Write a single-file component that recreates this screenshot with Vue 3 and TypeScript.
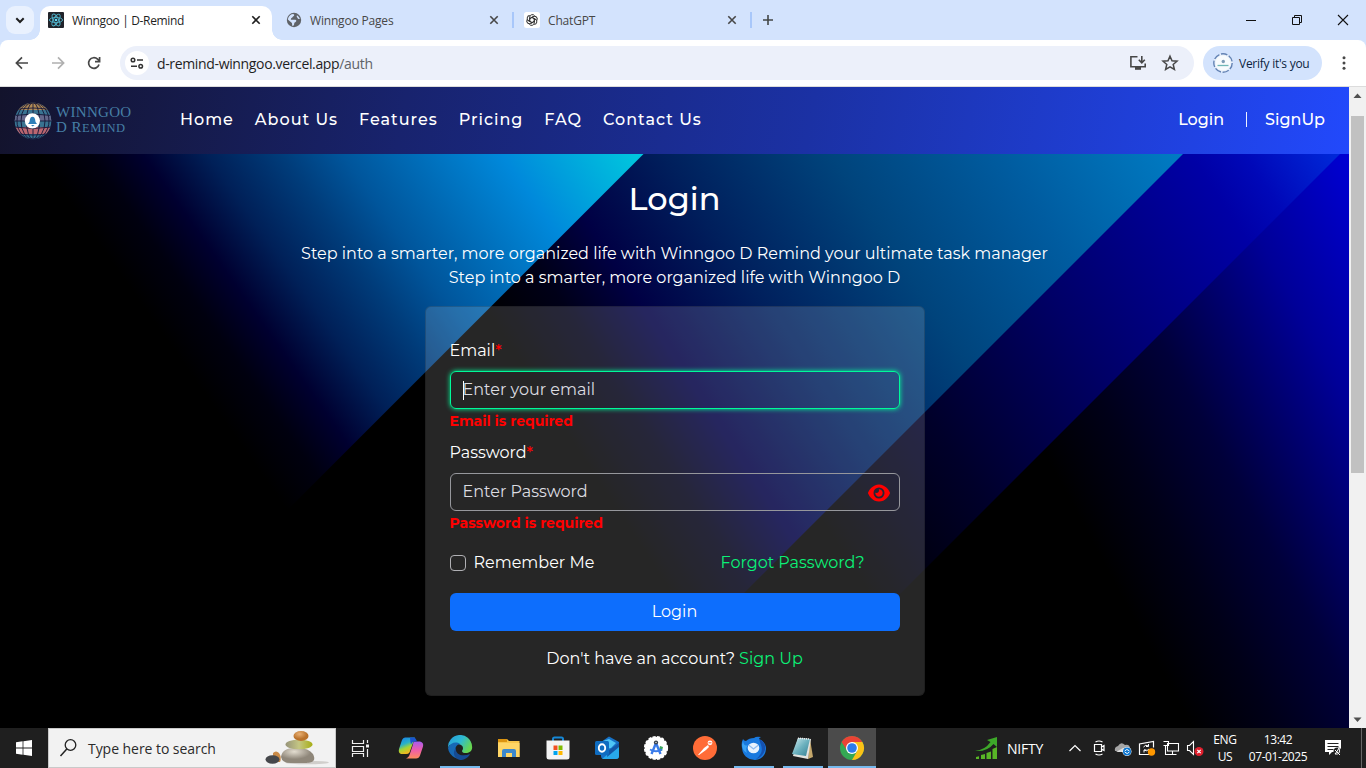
<script setup lang="ts">
interface Tab { title: string; icon: 'react' | 'globe' | 'gpt'; active?: boolean }
const tabs: Tab[] = [
  { title: 'Winngoo | D-Remind', icon: 'react', active: true },
  { title: 'Winngoo Pages', icon: 'globe' },
  { title: 'ChatGPT', icon: 'gpt' },
]
const links: string[] = ['Home', 'About Us', 'Features', 'Pricing', 'FAQ', 'Contact Us']
const petals: number[] = [0, 60, 120, 180, 240, 300]
</script>

<template>
  <div class="screen">
    <div class="tabstrip">
      <div class="tabsearch">
        <svg width="28" height="28" viewBox="0 0 28 28"><path d="M10.300 12.300l3.700 3.700 3.700-3.700" fill="none" stroke="#1f1f1f" stroke-width="2" /></svg>
      </div>
      <div v-for="t in tabs" :key="t.title" class="tab" :class="{ active: t.active }">
        <svg v-if="t.icon === 'react'" width="16" height="16" viewBox="0 0 16 16">
          <rect width="16" height="16" rx="1" fill="#20232a" />
          <g fill="none" stroke="#4fb3cb" stroke-width=".9">
            <ellipse cx="8" cy="8" rx="6.600" ry="2.600" />
            <ellipse cx="8" cy="8" rx="6.600" ry="2.600" transform="rotate(60 8 8)" />
            <ellipse cx="8" cy="8" rx="6.600" ry="2.600" transform="rotate(120 8 8)" />
          </g>
          <circle cx="8" cy="8" r="1.300" fill="#61dafb" />
        </svg>
        <svg v-else-if="t.icon === 'globe'" width="16" height="16" viewBox="0 0 16 16">
          <circle cx="8" cy="8" r="7.200" fill="#5f6368" />
          <path d="M7 1.900c2 .3 1.200 2 .2 2.400-.8.4-.4 1.500-1.600 1.600-.9.2-.3 1.500-1 1.800h4.600c1.300 0 1.400 1.500.6 2-.8.5-1.600 1-1.600 2s-.7 2.300-1.700 2.200c-.8-1.200.1-2.900-1.100-3.500C4 9.700 3 8.600 1.900 7.600 2.100 4.700 4.200 2.200 7 1.900zM11 3.200c1.200.8 2.400 2 2.800 3.700-.9.300-2-.1-2.200-1-.3-.8-1.500-1.300-.6-2.700z" fill="#d3e3fd" />
        </svg>
        <svg v-else width="16" height="16" viewBox="0 0 16 16">
          <rect width="16" height="16" rx="2.500" fill="#fff" />
          <g fill="none" stroke="#333" stroke-width="1">
            <path v-for="r in petals" :key="r" :transform="`rotate(${r} 8 8)`" d="M5.700 9.300V5.100a2.700 2.700 0 0 1 5-1.200M5.700 6.700L8.800 4.900" />
          </g>
        </svg>
        <span class="title">{{ t.title }}</span>
        <svg class="x" width="16" height="16" viewBox="0 0 16 16"><path d="M4.300 4.300l7.400 7.400M11.700 4.300l-7.400 7.400" stroke="currentColor" stroke-width="1.600" /></svg>
      </div>
      <svg class="plus" width="16" height="16" viewBox="0 0 16 16"><path d="M8 3v10M3 8h10" stroke="#444746" stroke-width="1.600" /></svg>
      <div class="winctl">
        <svg width="46" height="40" viewBox="0 0 46 40"><path d="M18 20.500h10" stroke="#111" /></svg>
        <svg width="46" height="40" viewBox="0 0 46 40"><path d="M18.500 17.500h7v7h-7zM20.500 17.500v-2h7v7h-2" fill="none" stroke="#111" /></svg>
        <svg width="46" height="40" viewBox="0 0 46 40"><path d="M18 15l10 10M28 15L18 25" stroke="#111" stroke-width="1.100" /></svg>
      </div>
    </div>

    <div class="toolbar">
      <div class="navbtns">
        <svg width="36" height="34" viewBox="0 0 36 34"><path d="M24 17H13M18 11.400L12.400 17l5.600 5.600" fill="none" stroke="#474747" stroke-width="1.700" /></svg>
        <svg width="36" height="34" viewBox="0 0 36 34"><path d="M12 17h11M18 11.400l5.600 5.600-5.600 5.600" fill="none" stroke="#b0b0b0" stroke-width="1.700" /></svg>
        <svg width="36" height="34" viewBox="0 0 36 34"><path d="M23 18.500a5.300 5.300 0 1 1-1.400-5.300l1.800 1.800M23.600 11v4.600H19" fill="none" stroke="#474747" stroke-width="1.700" /></svg>
      </div>
      <div class="omnibox">
        <span class="site">
          <svg width="24" height="24" viewBox="0 0 24 24"><g fill="none" stroke="#333" stroke-width="1.500"><circle cx="8" cy="9" r="1.800" /><path d="M12 9h6M6 15.300h6" /><circle cx="15.700" cy="15.300" r="1.800" /></g></svg>
        </span>
        <span class="url">d-remind-winngoo.vercel.app<i>/auth</i></span>
        <svg class="install" width="18" height="18" viewBox="0 0 18 18"><path d="M8.500 2.700H1.900v10.100H16.200V9.500M12.800 2v6.500M9.800 5.800l3 3 3-3" fill="none" stroke="#474747" stroke-width="1.600" /><path d="M6 13h6v2.800H6z" fill="#474747" /></svg>
        <svg class="star" width="18" height="18" viewBox="0 0 18 18"><path d="M9 2.200l2 4.600 5 .4-3.800 3.300 1.200 4.900L9 12.800l-4.400 2.600 1.200-4.900L2 7.200l5-.4z" fill="none" stroke="#474747" stroke-width="1.500" /></svg>
      </div>
      <div class="verify">
        <svg width="20" height="20" viewBox="0 0 20 20"><circle cx="10" cy="10" r="9.700" fill="#e8f0fa" /><circle cx="10" cy="10" r="9.200" fill="none" stroke="#6282b4" stroke-width="1.400" stroke-dasharray="6.600 1.600" /><circle cx="10" cy="10" r="7.500" fill="#f8fbfd" /><circle cx="10.300" cy="8.500" r="1.700" fill="#7e9cb6" /><path d="M4.500 12.500h11" stroke="#70b7b7" stroke-width="1.300" /></svg>
        <span>Verify it's you</span>
      </div>
      <svg class="dots" width="16" height="20" viewBox="0 0 16 20" fill="#474747"><circle cx="8" cy="4.800" r="1.500" /><circle cx="8" cy="10" r="1.500" /><circle cx="8" cy="15.200" r="1.500" /></svg>
    </div>

    <div class="viewport">
      <div class="page">
        <header>
          <div class="brand">
            <svg width="38" height="38" viewBox="0 0 38 38">
              <defs><clipPath id="ball"><circle cx="19" cy="19" r="18.300" /></clipPath></defs>
              <g clip-path="url(#ball)">
                <rect width="38" height="38" fill="#397391" />
                <rect width="38" height="8" fill="#b18a55" />
                <rect y="13" width="38" height="6" fill="#64678b" />
                <rect y="25" width="38" height="7" fill="#b96670" />
                <g fill="none" stroke="#151638" stroke-width=".9">
                  <path d="M0 8q19-4 38 0M0 13.500q19-3 38 0M0 25q19 3 38 0M0 31q19 4 38 0M0 19h38M19 0v38" />
                  <ellipse cx="19" cy="19" rx="6.500" ry="18.500" /><ellipse cx="19" cy="19" rx="12" ry="18.500" /><ellipse cx="19" cy="19" rx="16" ry="18.500" />
                </g>
              </g>
              <circle cx="18.400" cy="18.800" r="7.600" fill="#fff" />
              <path d="M14 22q2-2 2-5a2.600 3 0 0 1 5 0q0 3 2 5zM17 23h3.500l-1.700 1.600z" fill="#2f7fb8" />
            </svg>
            <div class="wordmark"><span class="w1">WINNGOO</span><span class="w2">D R<small>EMIND</small></span></div>
          </div>
          <nav><a v-for="l in links" :key="l">{{ l }}</a></nav>
          <div class="account"><a>Login</a><b></b><a>SignUp</a></div>
        </header>
        <main>
          <svg class="beams" viewBox="0 154 1349 574" preserveAspectRatio="none">
            <defs>
              <linearGradient id="g1" gradientUnits="userSpaceOnUse" x1="-49" y1="34.600" x2="359.500" y2="-253.900">
                <stop offset="0" stop-color="#000" /><stop offset=".09" stop-color="#00000f" /><stop offset=".176" stop-color="#000030" /><stop offset=".28" stop-color="#002058" /><stop offset=".4" stop-color="#003c7a" /><stop offset=".5" stop-color="#00559b" /><stop offset=".76" stop-color="#0089db" /><stop offset=".988" stop-color="#00c8de" />
              </linearGradient>
              <linearGradient id="g2" gradientUnits="userSpaceOnUse" x1="197" y1="-128.500" x2="783.500" y2="-511.400">
                <stop offset="0" stop-color="#000" /><stop offset=".1" stop-color="#000018" /><stop offset=".193" stop-color="#000044" /><stop offset=".336" stop-color="#001f5c" /><stop offset=".536" stop-color="#00447c" /><stop offset=".741" stop-color="#005ca0" /><stop offset=".96" stop-color="#007cc4" />
              </linearGradient>
              <linearGradient id="g3" gradientUnits="userSpaceOnUse" x1="335.200" y1="-218.800" x2="871.500" y2="-568.900">
                <stop offset="0" stop-color="#000" /><stop offset=".234" stop-color="#00002a" /><stop offset=".494" stop-color="#000066" /><stop offset=".8" stop-color="#0000a6" /><stop offset=".87" stop-color="#0008b8" /><stop offset="1" stop-color="#002bdb" />
              </linearGradient>
              <linearGradient id="g4" gradientUnits="userSpaceOnUse" x1="620.400" y1="-334.200" x2="981.200" y2="-528.500">
                <stop offset="0" stop-color="#000" /><stop offset=".18" stop-color="#000018" /><stop offset=".378" stop-color="#00003a" /><stop offset=".54" stop-color="#000068" /><stop offset=".71" stop-color="#000098" /><stop offset="1" stop-color="#0000d4" />
              </linearGradient>
            </defs>
            <rect y="154" width="1349" height="574" fill="url(#g4)" />
            <path d="M0 154H1340L766 728H0z" fill="url(#g3)" />
            <path d="M0 154H1183L609 728H0z" fill="url(#g2)" />
            <path d="M0 154H643.500L69.500 728H0z" fill="url(#g1)" />
          </svg>
          <div class="content">
            <h1>Login</h1>
            <p class="lead"><span>Step into a smarter, more organized life with Winngoo D Remind your ultimate task manager</span><span>Step into a smarter, more organized life with Winngoo D</span></p>
            <form class="card" @submit.prevent>
              <label>Email<em>*</em></label>
              <div class="field focus"><i class="caret"></i><span>Enter your email</span></div>
              <div class="error">Email is required</div>
              <label class="second">Password<em>*</em></label>
              <div class="field"><span>Enter Password</span>
                <svg class="eye" width="22" height="20" viewBox="0 0 576 512"><path fill="#f00" d="M288 32c-80.800 0-145.500 36.800-192.600 80.600C48.600 156 17.300 208 2.500 243.700c-3.300 7.900-3.300 16.700 0 24.600C17.300 304 48.600 356 95.400 399.400C142.500 443.200 207.200 480 288 480s145.500-36.800 192.600-80.600c46.800-43.500 78.100-95.400 93-131.100c3.300-7.900 3.300-16.700 0-24.600c-14.900-35.700-46.200-87.700-93-131.100C433.500 68.800 368.800 32 288 32zM144 256a144 144 0 1 1 288 0 144 144 0 1 1-288 0zm144-64c0 35.300-28.700 64-64 64c-7.100 0-13.900-1.200-20.300-3.300c-5.500-1.800-11.900 1.600-11.700 7.400c.3 6.900 1.300 13.800 3.200 20.700c13.700 51.200 66.400 81.600 117.600 67.900s81.600-66.400 67.900-117.600c-11.100-41.500-47.800-69.400-88.600-71.100c-5.800-.2-9.200 6.100-7.400 11.700c2.100 6.400 3.300 13.200 3.300 20.300z" /></svg>
              </div>
              <div class="error">Password is required</div>
              <div class="options"><i class="box"></i><span class="rem">Remember Me</span><a class="forgot">Forgot Password?</a></div>
              <button type="button">Login</button>
              <p class="signup"><span>Don't have an account?</span><a>Sign Up</a></p>
            </form>
          </div>
        </main>
      </div>
      <div class="scrollbar">
        <svg width="17" height="17" viewBox="0 0 17 17"><path d="M4.500 11L8.500 6.500l4 4.500z" fill="#505050" /></svg>
        <div class="thumb"></div>
        <svg class="down" width="17" height="17" viewBox="0 0 17 17"><path d="M4.500 6.500l4 4.500 4-4.500z" fill="#505050" /></svg>
      </div>
    </div>

    <footer class="taskbar">
      <svg width="48" height="40" viewBox="0 0 48 40"><path d="M16 14.200l6.600-.9v6.300H16zM23.400 13.200l8.600-1.200v7.600h-8.600zM16 20.400h6.600v6.300l-6.600-.9zM23.400 20.400H32V28l-8.600-1.200z" fill="#fff" /></svg>
      <div class="search">
        <svg width="39" height="38" viewBox="0 0 39 38"><circle cx="21.500" cy="16" r="5.300" fill="none" stroke="#222" stroke-width="1.300" /><path d="M17.800 20L11.500 27" stroke="#222" stroke-width="1.500" /></svg>
        <span>Type here to search</span>
        <svg class="stones" width="68" height="38" viewBox="0 0 68 38">
          <defs>
            <radialGradient id="s1" cx=".4" cy=".25"><stop offset="0" stop-color="#e3ddd0" /><stop offset="1" stop-color="#8f877a" /></radialGradient>
            <linearGradient id="s2"><stop offset="0" stop-color="#97947a" /><stop offset=".5" stop-color="#c4c683" /><stop offset="1" stop-color="#a7ae14" /></linearGradient>
            <radialGradient id="s3" cx=".4" cy=".3"><stop offset="0" stop-color="#e9b073" /><stop offset="1" stop-color="#b9722c" /></radialGradient>
          </defs>
          <ellipse cx="43" cy="33.500" rx="22" ry="1.800" fill="#d0cecb" />
          <path d="M9 24q3-3 6 0 3 4 1 9H9z" fill="#c98a47" />
          <ellipse cx="8.500" cy="30.500" rx="7" ry="4.200" fill="#45474b" />
          <path d="M17 28q1-9 14-9 13-1 18 6c4 8-2 9-9 9H27q-9 0-10-6z" fill="url(#s1)" />
          <ellipse cx="35" cy="15.500" rx="13.500" ry="4.800" fill="url(#s2)" />
          <ellipse cx="37" cy="7" rx="7.500" ry="5" fill="url(#s3)" />
        </svg>
      </div>
      <svg class="tv" width="50" height="40" viewBox="0 0 50 40"><path d="M16.500 12v3.500h11V12M16.500 18.500h11v5h-11zM16.500 29v-3.500h11V29M31.500 12v3M31.500 21v8" fill="none" stroke="#eee" stroke-width="1.200" /><rect x="30" y="16.500" width="3" height="3" fill="#eee" /></svg>
      <div class="app">
        <svg width="26" height="26" viewBox="0 0 26 26"><defs><linearGradient id="c1" x2=".4" y2="1"><stop offset="0" stop-color="#157cf0" /><stop offset=".45" stop-color="#28b1c8" /><stop offset=".7" stop-color="#a5d534" /><stop offset="1" stop-color="#f5b51e" /></linearGradient><linearGradient id="c2" x2="0" y2="1"><stop offset="0" stop-color="#a65cf0" /><stop offset=".5" stop-color="#ee5daa" /><stop offset="1" stop-color="#ff8b5c" /></linearGradient></defs><path d="M7 2.500h10l-5.500 15Q10.500 19 8 19H3q-3-1-2-5l3-9q1-2.500 3-2.500z" fill="url(#c1)" /><path d="M16 6.500h6q4 1 3 5l-3 9q-1 3-4 3H8q3-1 4-5l3-9q0-2 1-3z" fill="url(#c2)" /><path d="M12 2.500h4q2 .5 3 4h-3q-2 0-3 3-1-4-1-7z" fill="#1a55cf" /></svg>
      </div>
      <div class="app open">
        <svg width="26" height="26" viewBox="0 0 26 26"><defs><linearGradient id="d1" y2=".5"><stop offset="0" stop-color="#279bdb" /><stop offset=".55" stop-color="#2ebad3" /><stop offset="1" stop-color="#66d651" /></linearGradient></defs><path d="M1 13a12 12 0 0 1 24-2c1 5-3 7-6 7-2.500 0-5-1-3.500-3 1-1.600.6-4.500-2.500-5.500C8 8 2 9 1 13z" fill="url(#d1)" /><path d="M1 13C3 8 9 6 13 9c-3 .5-5 3-4.500 6 .8 5 6 8 10.500 7a12 12 0 0 1-18-9z" fill="#1768b5" /><path d="M9 13c-1 7 7 9 14 6-2 4-6 6-10 6-6-1-8-8-4-12z" fill="#164b93" /></svg>
      </div>
      <div class="app">
        <svg width="24" height="24" viewBox="0 0 24 24"><path d="M1 3h9l2 2h10.500v16H1z" fill="#f8c64b" /><path d="M1 3h9v3H1z" fill="#dc9410" /><path d="M1 7h21.500v14H1z" fill="#ffd666" /><path d="M5 21v-6q0-2 2-2h10q2 0 2 2v6h-4v-4H9v4z" fill="#3c88cc" /></svg>
      </div>
      <div class="app">
        <svg width="26" height="26" viewBox="0 0 26 26"><path d="M8 7V4Q8 2.500 9.500 2.500h7Q18 2.500 18 4V7" fill="none" stroke="#1687d5" stroke-width="2" /><path d="M1.500 5.500h23V22q0 2.500-2.500 2.500H4Q1.500 24.500 1.500 22z" fill="#f4f4f4" /><path d="M8.500 10.500h4V15h-4z" fill="#f25022" /><path d="M13.500 10.500h4V15h-4z" fill="#7fba00" /><path d="M8.500 16h4v4h-4z" fill="#00a4ef" /><path d="M13.500 16h4v4h-4z" fill="#ffb900" /></svg>
      </div>
      <div class="app">
        <svg width="26" height="26" viewBox="0 0 26 26"><path d="M7 7l8-5.500L25 7v14q0 3-3 3H10q-3 0-3-3z" fill="#1670c5" /><path d="M9 6l6-2 7 4-5 5-9 2z" fill="#4ec5f5" /><path d="M8 24l17-14v11q0 3-3 3z" fill="#28a8ea" /><path d="M14 16l11-8v4L13 22z" fill="#1255a5" /><rect x="1" y="6" width="14" height="14" rx="1.500" fill="#0f6cc0" /><ellipse cx="8" cy="13" rx="3.200" ry="3.700" fill="none" stroke="#fff" stroke-width="1.900" /></svg>
      </div>
      <div class="app">
        <svg width="26" height="26" viewBox="0 0 26 26"><circle cx="13" cy="13" r="11.300" fill="#fff" /><circle cx="13" cy="13" r="11.300" fill="none" stroke="#fff" stroke-width="1.600" stroke-dasharray="3 1.500" /><path d="M17 11l3 1-1 4-3-1z" fill="#3ba55c" /><path d="M13 8L8.500 19M13 8l4.500 11" stroke="#3a7bea" stroke-width="2.400" /><path d="M7 14.500q6 3.500 12 0" fill="none" stroke="#3a7bea" stroke-width="1.800" /><circle cx="13" cy="7.500" r="2.100" fill="#333d48" /><circle cx="13" cy="7.500" r=".7" fill="#fff" /></svg>
      </div>
      <div class="app">
        <svg width="26" height="26" viewBox="0 0 26 26"><circle cx="13" cy="13" r="12" fill="#ff6c37" /><path d="M6 20l6-7 4-3 1 2-3 3-7 5z" fill="#fff" /><circle cx="18" cy="7.800" r="2.400" fill="#fff" /><path d="M16.500 7.800h3" stroke="#ff6c37" /></svg>
      </div>
      <div class="app open">
        <svg width="26" height="26" viewBox="0 0 26 26"><path d="M2 4q1 2 3 2 3-3 8-3 2-2 7-1-2 1-2 2 7 3 7 10-1 10-11 11Q2 24 1 13 0 8 2 4z" fill="#1979de" /><path d="M18 4q7 3 6 11-3 8-9 9 8-6 5-14z" fill="#1451b0" /><ellipse cx="12.500" cy="13" rx="5.800" ry="5.200" fill="#e9f3fd" /><path d="M7.500 10l5 4 5-4" fill="none" stroke="#8fbdf0" stroke-width="1.300" /><path d="M2 6q1 6 5 4-3 3-1 8-5-3-5-8z" fill="#3aa3f3" /></svg>
      </div>
      <div class="app open">
        <svg width="26" height="26" viewBox="0 0 26 26"><defs><linearGradient id="n1" x2="1" y2="1"><stop offset="0" stop-color="#d5edf0" /><stop offset=".5" stop-color="#6fb3c0" /><stop offset="1" stop-color="#327f94" /></linearGradient></defs><path d="M20 4l3 18-5 2z" fill="#c4a76b" /><path d="M8 3l13 1-3 20-15-3z" fill="#e3e3df" /><path d="M8 3l12 1-4 17L2 19z" fill="url(#n1)" /><path d="M8 3.200l12 1" stroke="#eee" stroke-width="1.500" stroke-dasharray="1 1" /></svg>
      </div>
      <div class="app open current">
        <svg width="26" height="26" viewBox="0 0 26 26"><circle cx="13" cy="13" r="12" fill="#34a853" /><path d="M2.600 7A12 12 0 0 1 23.400 7H13L8 15.500z" fill="#ea4335" /><path d="M23.400 7A12 12 0 0 1 13 25l5.200-9L13 7z" fill="#fbc116" /><circle cx="13" cy="13" r="6" fill="#fff" /><circle cx="13" cy="13" r="4.800" fill="#2d7bea" /></svg>
      </div>
      <div class="stock">
        <svg width="24" height="24" viewBox="0 0 24 24"><path d="M1 23v-2l3-.8V23zM6 23v-4l4-1v5zM11.500 23v-6l4.500-1.500V23zM17.500 23V13l4.500-2v12z" fill="#58b526" /><path d="M0 15q10-1 15.500-9L12 4l10-3v10l-3.500-3Q12 16 0 15z" fill="#3da829" /></svg>
        <span>NIFTY</span>
      </div>
      <div class="tray">
        <svg viewBox="0 0 24 24"><path d="M6.500 15l5.500-5.500 5.500 5.500" fill="none" stroke="#fff" stroke-width="1.200" /></svg>
        <svg viewBox="0 0 24 24"><path d="M7.500 8.500h7v7h-7zM14.500 11l2.500-1.500v5L14.500 13M8.500 6q3.500-2 7 0M8.500 18q3.500 2 7 0" fill="none" stroke="#fff" stroke-width="1.200" /></svg>
        <svg viewBox="0 0 24 24"><path d="M4 15q-1-4 3-5 3-5 7-1 5-1 5 4v2z" fill="#a5a5a5" /><path d="M5 16l7-4 6 3v1z" fill="#dedede" /><circle cx="16" cy="15.500" r="4.500" fill="#fff" /><circle cx="16" cy="15.500" r="4" fill="#0873cf" /><path d="M13.700 15q2-3 4.600-.2M18.400 16q-2 3-4.600.2" fill="none" stroke="#fff" /></svg>
        <svg viewBox="0 0 24 24"><path d="M14 18.500H4.500V8L18.500 5.500v6" fill="none" stroke="#fff" stroke-width="1.200" /><path d="M8.500 11q2-3 5-1M13.500 8v2.500H11M14 13q-2 3-5 1M9 16.500V14h2.500" fill="none" stroke="#fff" /><circle cx="16.500" cy="16" r="3.700" fill="#ff9800" /></svg>
        <svg viewBox="0 0 24 24"><path d="M8.500 7.500h11v7.500h-11zM13.500 15v3.500M10 18.500h7.500M4.500 5.500h5v4h-5M6.500 9.500v9h4" fill="none" stroke="#fff" stroke-width="1.100" /></svg>
        <svg viewBox="0 0 24 24"><path d="M4.500 9.500h2l4-4v13l-4-4h-2z" fill="none" stroke="#fff" stroke-width="1.100" /><circle cx="16" cy="15.500" r="4.500" fill="#df1f2d" /><path d="M14.300 13.800l3.400 3.400M17.700 13.800l-3.400 3.400" stroke="#fff" stroke-width="1.200" /></svg>
      </div>
      <div class="lang"><span>ENG</span><span>US</span></div>
      <div class="clock"><span>13:42</span><span>07-01-2025</span></div>
      <svg class="notif" width="40" height="40" viewBox="0 0 40 40"><path d="M12 12h16v12h-9l-3 3v-3h-4z" fill="#fff" /><path d="M14.500 15.500h11M14.500 18.500h11M14.500 21.500h6" stroke="#222" /><circle cx="24.500" cy="23.500" r="4" fill="#222" /><path d="M22 26q6 1 4-6-2 4-4 6zM22 22l5 5" fill="none" stroke="#fff" /></svg>
      <div class="peek"></div>
    </footer>
  </div>
</template>

<style>
html, body { margin: 0; overflow: hidden; background: #000; }
</style>

<style scoped>
* { box-sizing: border-box; }
svg { display: block; flex: none; }
.screen { width: 1366px; height: 768px; display: flex; flex-direction: column; overflow: hidden; background: #d3e3fd; font-family: "Open Sans", "Noto Sans", sans-serif; white-space: nowrap; }

.tabstrip { height: 40px; display: flex; align-items: center; padding-left: 6px; flex: none; }
.tabsearch { width: 28px; height: 28px; border-radius: 9px; background: #e9f1fe; margin-right: 6px; }
.tab { display: flex; align-items: center; height: 28px; width: 238px; padding: 0 8px 0 14px; font-size: 12px; color: #474747; position: relative; }
.tab .title { margin-left: 8px; flex: 1; letter-spacing: -.18px; }
.tab.active { width: 232px; height: 34px; padding: 0 8px 6px; align-self: flex-end; background: #fff; border-radius: 10px 10px 0 0; color: #1f1f1f; }
.tab.active .title { letter-spacing: -.34px; }
.tab.active::before, .tab.active::after { content: ""; position: absolute; bottom: 0; width: 10px; height: 10px; }
.tab.active::before { left: -10px; background: radial-gradient(circle at 0 0, transparent 9.500px, #fff 10px); }
.tab.active::after { right: -10px; background: radial-gradient(circle at 100% 0, transparent 9.500px, #fff 10px); }
.tab:not(.active)::after { content: ""; width: 2px; height: 16px; background: #a8c7fa; position: absolute; right: -4px; top: 6px; }
.plus { margin-left: 12px; }
.winctl { display: flex; margin-left: auto; }

.toolbar { height: 47px; background: #fff; border-bottom: 1px solid #dcdcdc; border-radius: 8px 8px 0 0; display: flex; align-items: center; padding-left: 4px; flex: none; }
.navbtns { display: flex; width: 116px; }
.omnibox { width: 1074px; height: 34px; border-radius: 17px; background: #ecf0fa; display: flex; align-items: center; padding: 0 15px 0 5px; }
.site { width: 24px; height: 24px; border-radius: 12px; background: #fff; margin-right: 8px; }
.url { font-size: 14px; color: #1f1f1f; letter-spacing: -.35px; flex: 1; }
.url i { font-style: normal; color: #5f6368; }
.star { margin-left: 14px; }
.verify { width: 119px; height: 34px; border-radius: 17px; background: #d3e3fd; margin-left: 9px; display: flex; align-items: center; padding-left: 10px; gap: 6px; font-size: 12px; color: #0b1f3f; letter-spacing: -.26px; }
.dots { margin-left: 14px; }

.viewport { display: flex; height: 641px; flex: none; }
.page { width: 1349px; font-family: Montserrat, Inter, sans-serif; color: #fff; display: flex; flex-direction: column; }
header { height: 67px; background: linear-gradient(100deg, #13132c 0%, #18236e 30%, #1b31a4 60%, #2249fc 100%); display: flex; align-items: center; padding-left: 14px; }
.brand { display: flex; align-items: center; width: 166px; gap: 4px; }
.wordmark { font-family: "Liberation Serif", serif; color: #467fa5; display: flex; flex-direction: column; line-height: 15px; }
.w1 { font-size: 15px; letter-spacing: .3px; }
.w2 { font-size: 15px; letter-spacing: .5px; }
.w2 small { font-size: 12.500px; }
nav { display: flex; gap: 21px; font-size: 16px; font-weight: 500; letter-spacing: 1px; line-height: 24px; margin-top: -2px; }
.account { margin-left: auto; display: flex; align-items: center; font-size: 16px; font-weight: 500; line-height: 24px; margin-top: -2px; padding-right: 24px; }
.account b { width: 1px; height: 15px; background: #eef1ff; margin: 0 18px 0 22px; }

main { height: 574px; display: grid; background: #000; }
.beams { grid-area: 1 / 1; width: 1349px; height: 574px; }
.content { grid-area: 1 / 1; z-index: 1; display: flex; flex-direction: column; align-items: center; padding-top: 26px; }
h1 { margin: 0; font-size: 32px; line-height: 38px; font-weight: 500; }
.lead { margin: 24px 0 16px; display: flex; flex-direction: column; align-items: center; font-size: 16px; line-height: 24px; }
.card { width: 500px; height: 390px; background: rgba(255, 255, 255, .15); border: 1px solid rgba(0, 0, 0, .175); border-radius: 6px; padding: 32px 24px 0; font-size: 16px; display: flex; flex-direction: column; }
label { line-height: 24px; height: 24px; margin-bottom: 8px; display: flex; }
label.second { margin-top: 10px; }
em { font-style: normal; font-weight: 500; color: #f00; }
.field { height: 38px; flex: none; border: 1px solid #96979c; border-radius: 6px; padding: 0 9px 0 12px; display: flex; align-items: center; justify-content: space-between; color: #dcdce0; }
.field.focus { border-color: #00fa9a; box-shadow: 0 0 5px #00fa9a; justify-content: flex-start; }
.caret { width: 1px; height: 19px; background: #fff; margin-right: -1px; }
.field span { margin-top: -2px; }
.eye { margin-top: 1px; }
.error { height: 20px; line-height: 20px; margin-top: 2px; color: #f00; font-size: 14px; font-weight: 700; }
.options { margin-top: 18px; height: 24px; display: flex; align-items: center; }
.rem, .forgot { margin-top: -2px; }
.box { width: 16px; height: 16px; border: 1px solid #b0b0b4; border-radius: 4px; margin-right: 8px; }
.forgot { margin-left: auto; margin-right: 35px; color: #0bf177; }
button { margin-top: 18px; height: 38px; border: 0; border-radius: 6px; background: #0d6efd; color: #fff; font: inherit; font-size: 16px; padding: 0 0 2px; }
.signup { margin: 16px 0 0; line-height: 24px; display: flex; justify-content: center; gap: 4px; }
.signup a { color: #0bf177; }

.scrollbar { width: 17px; background: #f1f1f1; display: flex; flex-direction: column; align-items: center; }
.thumb { width: 13px; height: 357px; background: #c1c1c1; margin-top: 12px; }
.down { margin-top: auto; }

.taskbar { height: 40px; background: #1f1f1f; display: flex; align-items: center; color: #fff; flex: none; }
.search { width: 288px; height: 40px; background: #f2f2f2; border: 1px solid #c9c9c9; display: flex; align-items: center; padding-right: 3px; }
.search span { font-size: 14px; color: #2b2b2b; letter-spacing: -.05px; flex: 1; }
.app { width: 49px; height: 40px; display: flex; align-items: center; justify-content: center; flex: none; }
.app.open { background: linear-gradient(#76b9ed, #76b9ed) 50% 100% / 40px 2px no-repeat; }
.app.current { width: 48px; margin-left: 1px; background: linear-gradient(#76b9ed, #76b9ed) 50% 100% / 48px 2px no-repeat, #4b4b4b; }
.stock { margin-left: auto; display: flex; align-items: center; gap: 8px; width: 88px; font-size: 14px; letter-spacing: -.2px; }
.tray { display: flex; width: 144px; }
.tray svg { width: 24px; height: 24px; }
.lang, .clock { display: flex; flex-direction: column; align-items: center; font-size: 12px; line-height: 17px; width: 36px; letter-spacing: -.3px; }
.clock { width: 70px; letter-spacing: -.42px; }
.peek { width: 13px; height: 40px; flex: none; background: linear-gradient(#666, #666) 8px 0 / 1px 40px no-repeat; }
</style>
